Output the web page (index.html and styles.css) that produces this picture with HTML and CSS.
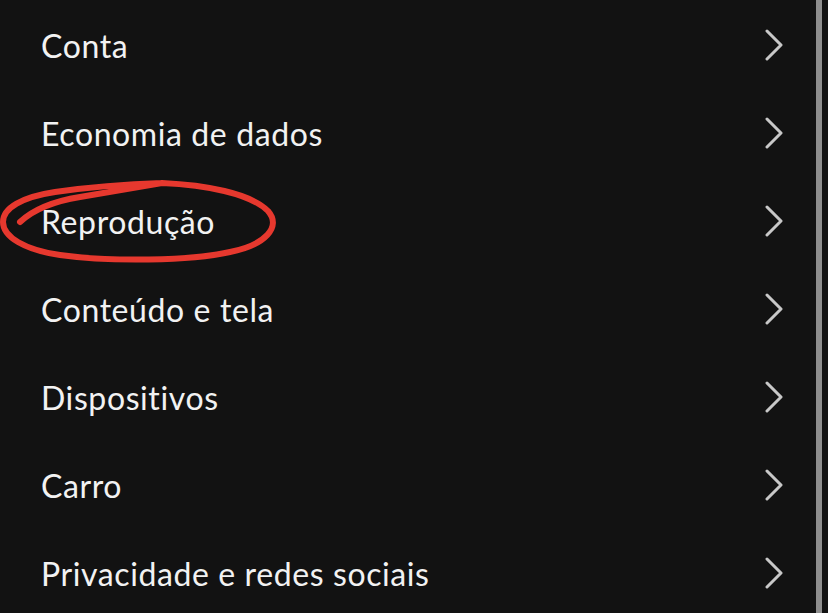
FILE: index.html
```html
<!DOCTYPE html>
<html lang="pt-BR">
<head>
<meta charset="utf-8">
<title>Configurações</title>
<link rel="stylesheet" href="styles.css">
</head>
<body>
<div class="screen">
  <ul class="settings">
    <li class="row"><span class="label">Conta</span><svg class="chevron" viewBox="0 0 18 32"><polyline points="2,2 16,16 2,30"/></svg></li>
    <li class="row"><span class="label">Economia de dados</span><svg class="chevron" viewBox="0 0 18 32"><polyline points="2,2 16,16 2,30"/></svg></li>
    <li class="row highlighted"><span class="label">Reprodução</span><svg class="chevron" viewBox="0 0 18 32"><polyline points="2,2 16,16 2,30"/></svg>
      <svg class="scribble" viewBox="0 0 280 90">
        <path d="M20 47 C 35 33, 55 26, 80 22 C 110 17, 140 12, 162 8 C 205 10, 250 18, 268 36 C 282 52, 265 70, 230 77 C 190 86, 110 87, 60 80 C 25 75, 3 62, 3 47 C 3 33, 22 22, 55 17 C 90 12, 130 9, 162 8"/>
      </svg>
    </li>
    <li class="row"><span class="label">Conteúdo e tela</span><svg class="chevron" viewBox="0 0 18 32"><polyline points="2,2 16,16 2,30"/></svg></li>
    <li class="row"><span class="label">Dispositivos</span><svg class="chevron" viewBox="0 0 18 32"><polyline points="2,2 16,16 2,30"/></svg></li>
    <li class="row"><span class="label">Carro</span><svg class="chevron" viewBox="0 0 18 32"><polyline points="2,2 16,16 2,30"/></svg></li>
    <li class="row"><span class="label">Privacidade e redes sociais</span><svg class="chevron" viewBox="0 0 18 32"><polyline points="2,2 16,16 2,30"/></svg></li>
  </ul>
  <div class="scrollbar"></div>
</div>
</body>
</html>
```
FILE: styles.css
```css
html, body {
  margin: 0;
  padding: 0;
  background: #121212;
}

.screen {
  display: flex;
  width: 828px;
  height: 613px;
  overflow: hidden;
}

.settings {
  flex: 1;
  list-style: none;
  margin: 0;
  padding: 1px 33px 0 41px;
}

.row {
  position: relative;
  display: flex;
  align-items: center;
  justify-content: space-between;
  height: 88px;
}

.label {
  font-family: "Lato", "Noto Sans", sans-serif;
  font-size: 32px;
  color: #f2f2f2;
  letter-spacing: 0.6px;
}

.chevron {
  width: 18px;
  height: 32px;
  fill: none;
  stroke: #c8c8c8;
  stroke-width: 3;
  stroke-linecap: round;
  stroke-linejoin: round;
}

/* hand-drawn red loop around the highlighted entry */
.scribble {
  position: absolute;
  left: -41px;
  top: -2px;
  width: 280px;
  height: 90px;
  fill: none;
  stroke: #e6382e;
  stroke-width: 6;
  stroke-linecap: round;
  stroke-linejoin: round;
  pointer-events: none;
}

.scrollbar {
  width: 6px;
  margin-right: 6px;
  background: #8e8e8e;
}
```
